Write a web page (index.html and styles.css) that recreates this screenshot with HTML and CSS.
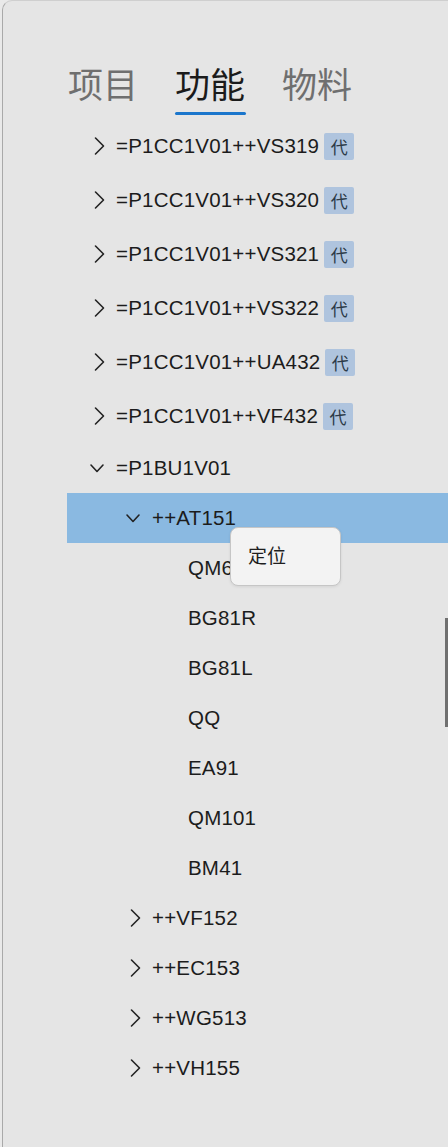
FILE: index.html
```html
<!DOCTYPE html>
<html lang="zh">
<head>
<meta charset="utf-8">
<title>功能</title>
<link rel="stylesheet" href="styles.css">
</head>
<body>
<div class="panel">
  <div class="tabs">
    <div class="tab">项目</div>
    <div class="tab active">功能</div>
    <div class="tab">物料</div>
  </div>
  <div class="tree">
    <div class="row tall l0"><span class="chev"><svg viewBox="0 0 24 24"><path d="M9.5 4 L17.5 12 L9.5 20"/></svg></span><span class="label">=P1CC1V01++VS319</span><span class="badge">代</span></div>
    <div class="row tall l0"><span class="chev"><svg viewBox="0 0 24 24"><path d="M9.5 4 L17.5 12 L9.5 20"/></svg></span><span class="label">=P1CC1V01++VS320</span><span class="badge">代</span></div>
    <div class="row tall l0"><span class="chev"><svg viewBox="0 0 24 24"><path d="M9.5 4 L17.5 12 L9.5 20"/></svg></span><span class="label">=P1CC1V01++VS321</span><span class="badge">代</span></div>
    <div class="row tall l0"><span class="chev"><svg viewBox="0 0 24 24"><path d="M9.5 4 L17.5 12 L9.5 20"/></svg></span><span class="label">=P1CC1V01++VS322</span><span class="badge">代</span></div>
    <div class="row tall l0"><span class="chev"><svg viewBox="0 0 24 24"><path d="M9.5 4 L17.5 12 L9.5 20"/></svg></span><span class="label">=P1CC1V01++UA432</span><span class="badge">代</span></div>
    <div class="row tall l0"><span class="chev"><svg viewBox="0 0 24 24"><path d="M9.5 4 L17.5 12 L9.5 20"/></svg></span><span class="label">=P1CC1V01++VF432</span><span class="badge">代</span></div>
    <div class="row l0"><span class="chev"><svg viewBox="0 0 24 24"><path d="M5 9 L11 15.5 L17 9"/></svg></span><span class="label">=P1BU1V01</span></div>
    <div class="row l1 sel"><span class="chev"><svg viewBox="0 0 24 24"><path d="M5 9 L11 15.5 L17 9"/></svg></span><span class="label">++AT151</span></div>
    <div class="row l2"><span class="chev"></span><span class="label">QM61</span></div>
    <div class="row l2"><span class="chev"></span><span class="label">BG81R</span></div>
    <div class="row l2"><span class="chev"></span><span class="label">BG81L</span></div>
    <div class="row l2"><span class="chev"></span><span class="label">QQ</span></div>
    <div class="row l2"><span class="chev"></span><span class="label">EA91</span></div>
    <div class="row l2"><span class="chev"></span><span class="label">QM101</span></div>
    <div class="row l2"><span class="chev"></span><span class="label">BM41</span></div>
    <div class="row l1"><span class="chev"><svg viewBox="0 0 24 24"><path d="M9.5 4 L17.5 12 L9.5 20"/></svg></span><span class="label">++VF152</span></div>
    <div class="row l1"><span class="chev"><svg viewBox="0 0 24 24"><path d="M9.5 4 L17.5 12 L9.5 20"/></svg></span><span class="label">++EC153</span></div>
    <div class="row l1"><span class="chev"><svg viewBox="0 0 24 24"><path d="M9.5 4 L17.5 12 L9.5 20"/></svg></span><span class="label">++WG513</span></div>
    <div class="row l1"><span class="chev"><svg viewBox="0 0 24 24"><path d="M9.5 4 L17.5 12 L9.5 20"/></svg></span><span class="label">++VH155</span></div>
  </div>
  <div class="menu"><span>定位</span></div>
  <div class="scrollbar"></div>
</div>
</body>
</html>
```

FILE: styles.css
```css
html, body {
  margin: 0;
  padding: 0;
}
body {
  width: 448px;
  height: 1147px;
  overflow: hidden;
  background: #e9e9e9;
  font-family: "Liberation Sans", "Noto Sans CJK SC", sans-serif;
}
.panel {
  position: relative;
  margin-left: 2px;
  height: 1147px;
  box-sizing: border-box;
  background: #e5e5e5;
  border-left: 1px solid #a9a9a9;
  border-top: 1px solid #cfcfcf;
  border-top-left-radius: 10px;
}
.tabs {
  display: flex;
  gap: 37px;
  height: 118px;
  box-sizing: border-box;
  padding: 64px 0 0 65px;
}
.tab {
  position: relative;
  height: 35px;
  font-family: "Noto Sans CJK SC", sans-serif;
  font-size: 35px;
  line-height: 35px;
  color: #6f6f6f;
}
.tab.active {
  color: #1b1b1b;
}
.tab.active::after {
  content: "";
  position: absolute;
  left: 0;
  right: -1px;
  top: 47px;
  height: 3px;
  border-radius: 2px;
  background: #1b76cc;
}
.tree {
  margin-left: 64px;
}
.row {
  display: flex;
  align-items: center;
  height: 50px;
  padding-left: 19px;
  font-size: 20.5px;
  letter-spacing: 0.2px;
  color: #1c1c1c;
}
.row.tall {
  height: 54px;
}
.row.l1 {
  padding-left: 55px;
}
.row.l2 {
  padding-left: 91px;
}
.row.sel {
  background: #8ab9e1;
}
.chev {
  flex: none;
  width: 24px;
  height: 24px;
  margin-right: 6px;
}
.chev svg {
  display: block;
  width: 24px;
  height: 24px;
  fill: none;
  stroke: #222;
  stroke-width: 1.6;
  stroke-linecap: round;
  stroke-linejoin: round;
}
.badge {
  display: flex;
  align-items: center;
  justify-content: center;
  width: 30px;
  height: 27px;
  margin-left: 5px;
  border-radius: 2px;
  background: #afc4de;
  font-family: "Noto Sans CJK SC", sans-serif;
  font-size: 17px;
  letter-spacing: 0;
  color: #2c3a48;
}
.menu {
  position: absolute;
  left: 227px;
  top: 526px;
  width: 111px;
  height: 59px;
  box-sizing: border-box;
  display: flex;
  align-items: center;
  padding: 0 0 4px 17px;
  background: #f3f3f3;
  border: 1px solid #c6c6c6;
  border-radius: 8px;
  box-shadow: 0 1px 3px rgba(0, 0, 0, 0.08);
  font-family: "Noto Sans CJK SC", sans-serif;
  font-size: 19px;
  color: #1e1e1e;
}
.scrollbar {
  position: absolute;
  left: 442px;
  top: 617px;
  width: 3px;
  height: 109px;
  background: #707070;
}
```
